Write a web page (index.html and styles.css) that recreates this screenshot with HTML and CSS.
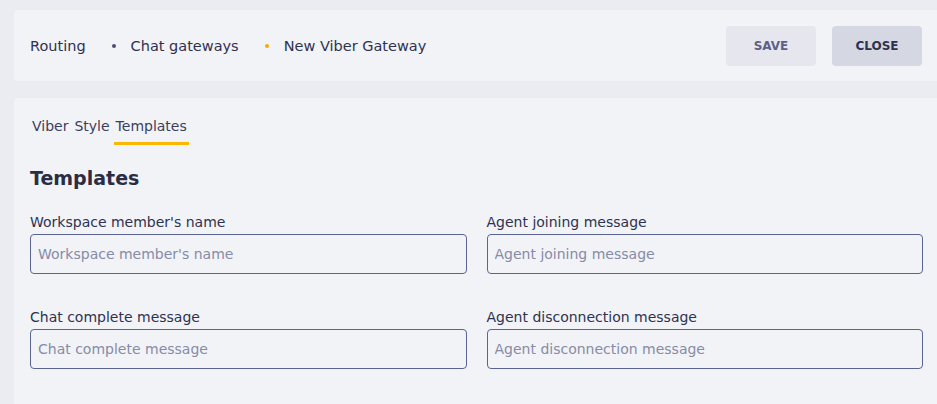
FILE: index.html
```html
<!DOCTYPE html>
<html lang="en">
<head>
<meta charset="utf-8">
<title>New Viber Gateway</title>
<link rel="stylesheet" href="styles.css">
</head>
<body>
<div class="page">
  <header class="topbar">
    <nav class="crumbs">
      <span class="crumb">Routing</span>
      <span class="sep"></span>
      <span class="crumb">Chat gateways</span>
      <span class="sep sep-active"></span>
      <span class="crumb">New Viber Gateway</span>
    </nav>
    <div class="actions">
      <button class="btn btn-save">SAVE</button>
      <button class="btn btn-close">CLOSE</button>
    </div>
  </header>
  <main class="panel">
    <div class="tabs">
      <span class="tab">Viber</span>
      <span class="tab">Style</span>
      <span class="tab tab-active">Templates</span>
    </div>
    <h2 class="title">Templates</h2>
    <div class="grid">
      <label class="field">
        <span class="label">Workspace member's name</span>
        <input class="input" placeholder="Workspace member's name">
      </label>
      <label class="field">
        <span class="label">Agent joining message</span>
        <input class="input" placeholder="Agent joining message">
      </label>
      <label class="field">
        <span class="label">Chat complete message</span>
        <input class="input" placeholder="Chat complete message">
      </label>
      <label class="field">
        <span class="label">Agent disconnection message</span>
        <input class="input" placeholder="Agent disconnection message">
      </label>
    </div>
  </main>
</div>
</body>
</html>
```

FILE: styles.css
```css
* { box-sizing: border-box; }
html, body { margin: 0; height: 100%; }
body {
  background: #ebecf1;
  font-family: "DejaVu Sans", "Noto Sans", sans-serif;
  color: #2e3250;
  overflow: hidden;
}
.page {
  padding: 10px 0 0 14px;
  height: 100%;
  display: flex;
  flex-direction: column;
}
.topbar {
  background: #f2f3f7;
  border-radius: 4px 0 0 4px;
  height: 71px;
  display: flex;
  align-items: center;
  justify-content: space-between;
  padding: 0 15px 0 16px;
}
.crumbs {
  display: flex;
  align-items: center;
  font-size: 14.5px;
  color: #2e3250;
}
.sep {
  width: 4px;
  height: 4px;
  border-radius: 50%;
  background: #4a4f75;
  margin: 0 15px 0 26px;
}
.sep-active { background: #f5aa00; }
.actions { display: flex; gap: 16px; }
.btn {
  width: 90px;
  height: 40px;
  border: 0;
  border-radius: 4px;
  font-family: inherit;
  font-size: 12px;
  font-weight: bold;
  color: #3d4470;
  cursor: pointer;
}
.btn-save { background: #e6e7ee; color: #5a6088; }
.btn-close { background: #d5d8e2; color: #2e3250; }
.panel {
  margin-top: 17px;
  flex: 1;
  background: #f2f3f7;
  border-radius: 4px 0 0 0;
  padding: 18px 14px 0 16px;
}
.tabs {
  display: flex;
  gap: 2px;
  font-size: 14px;
  line-height: 20px;
  color: #3a3e5e;
}
.tab {
  padding: 0 2px 6px;
  border-bottom: 3px solid transparent;
}
.tab-active { border-bottom-color: #fbb700; }
.title {
  margin: 21px 0 0;
  font-size: 19px;
  line-height: 24px;
  font-weight: bold;
  color: #2a2d45;
}
.grid {
  margin-top: 22px;
  display: grid;
  grid-template-columns: 1fr 1fr;
  column-gap: 20px;
  row-gap: 33px;
}
.field { display: flex; flex-direction: column; gap: 4px; }
.label {
  font-size: 14px;
  line-height: 18px;
  padding-top: 1px;
  color: #2e3250;
}
.input {
  height: 40px;
  margin-top: -1px;
  border: 1px solid #5b6390;
  border-radius: 4px;
  background: transparent;
  padding: 0 7px;
  font-family: inherit;
  font-size: 14px;
  color: #2e3250;
  outline: none;
}
.input::placeholder { color: #868ba6; }
```
